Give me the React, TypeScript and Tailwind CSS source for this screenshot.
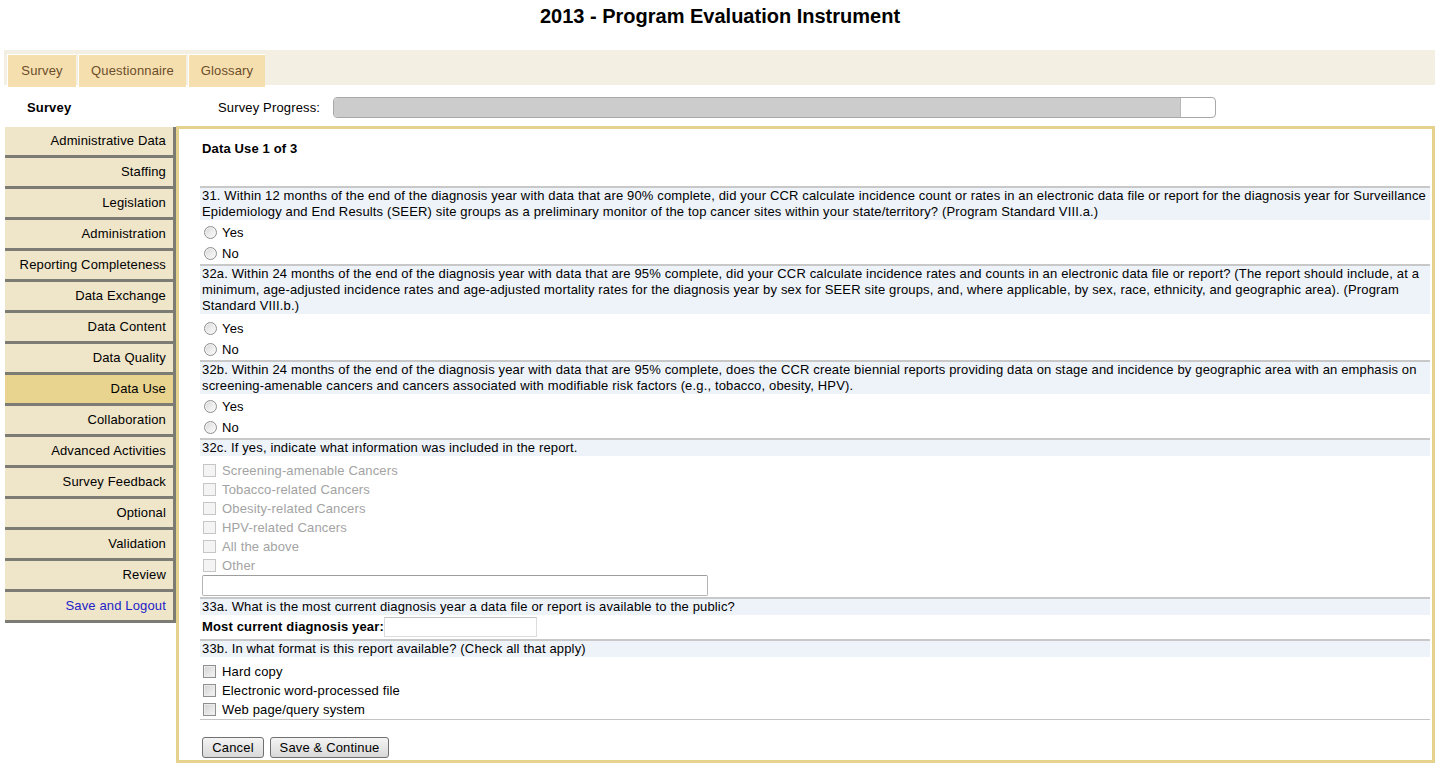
import React from 'react';

const navItems = [
    'Administrative Data',
    'Staffing',
    'Legislation',
    'Administration',
    'Reporting Completeness',
    'Data Exchange',
    'Data Content',
    'Data Quality',
    'Data Use',
    'Collaboration',
    'Advanced Activities',
    'Survey Feedback',
    'Optional',
    'Validation',
    'Review',
];

function Radio({ label }: { label: string }) {
    return (
        <div className="flex h-[21px] items-center pl-[4px]">
            <span className="h-[13px] w-[13px] rounded-full border border-[#8e8f8f] bg-gradient-to-br from-[#d4d4d4] via-[#ececec] to-[#fafafa] shadow-[inset_0_0_0_1px_#f4f4f4]" />
            <span className="ml-[5px]">{label}</span>
        </div>
    );
}

function Check({ label, disabled = false }: { label: string; disabled?: boolean }) {
    return (
        <div className="flex h-[19px] items-center pl-[3px]">
            <span
                className={
                    disabled
                        ? 'h-[13px] w-[13px] border border-[#c6c6c6] bg-[#f4f4f4]'
                        : 'h-[13px] w-[13px] border border-[#8f8f8f] bg-gradient-to-br from-[#d2d2d2] to-[#f6f6f6] shadow-[inset_0_0_0_1px_#ececec]'
                }
            />
            <span className={disabled ? 'ml-[6px] text-[#a3a3a3]' : 'ml-[6px]'}>{label}</span>
        </div>
    );
}

function Question({ children }: { children: React.ReactNode }) {
    return (
        <div className="border-t-2 border-[#c8c8c8] bg-[#eef3fa] pl-[2px] pr-[4px] leading-[16px]">
            {children}
        </div>
    );
}

function Button({ children, w }: { children: React.ReactNode; w: string }) {
    return (
        <button
            className={`${w} h-[21px] rounded-[3px] border border-[#707070] bg-gradient-to-b from-[#f4f4f4] to-[#d9d9d9] text-[13px] leading-[19px] text-black`}
        >
            {children}
        </button>
    );
}

export default function App() {
    return (
        <div className="w-[1449px] h-[774px] overflow-hidden bg-white text-[13px] tracking-[0.15px] text-black [font-family:'Liberation_Sans',Arial,sans-serif]">
            <h1 className="pr-[9px] pt-[4px] text-center text-[20px] font-bold leading-[24px] tracking-normal">
                2013 - Program Evaluation Instrument
            </h1>

            {/* top tabs */}
            <div className="mx-[4px] mt-[22px] flex h-[35px] w-[1431px] gap-[2px] bg-[#f3efe2] pl-[3px] pt-[4px]">
                <div className="flex h-[33px] w-[69px] items-center justify-center border-l border-t border-white bg-[#f6dfae] text-[#6b4d2b]">
                    Survey
                </div>
                <div className="flex h-[33px] w-[108px] items-center justify-center border-l border-t border-white bg-[#f6dfae] text-[#6b4d2b]">
                    Questionnaire
                </div>
                <div className="flex h-[33px] w-[77px] items-center justify-center border-l border-t border-white bg-[#f6dfae] text-[#6b4d2b]">
                    Glossary
                </div>
            </div>

            {/* progress row */}
            <div className="flex h-[41px] items-center pt-[4px]">
                <div className="w-[175px] pl-[27px] font-bold">Survey</div>
                <div className="ml-[43px] w-[115px] whitespace-nowrap">Survey Progress:</div>
                <div className="h-[21px] w-[883px] overflow-hidden rounded-[4px] border border-[#a8a8a8] bg-white">
                    <div className="h-full w-[847px] border-r border-[#b8b8b8] bg-[#cccccc]" />
                </div>
            </div>

            <div className="flex">
                {/* sidebar */}
                <div className="w-[176px] pl-[5px] pt-[1px]">
                    {navItems.map((item) => (
                        <div
                            key={item}
                            className={`flex h-[31px] items-center justify-end border-b-[3px] border-r-[3px] border-[#7c7b74] pr-[7px] ${
                                item === 'Data Use' ? 'bg-[#e8d48f]' : 'bg-[#efe5c9]'
                            }`}
                        >
                            {item}
                        </div>
                    ))}
                    <div className="flex h-[31px] items-center justify-end border-b-[3px] border-r-[3px] border-[#7c7b74] bg-[#efe5c9] pr-[7px] text-[#2323c8]">
                        Save and Logout
                    </div>
                </div>

                {/* content panel */}
                <div className="h-[637px] w-[1259px] border-[3px] border-[#e5d28c] pl-[21px] pr-[2px]">
                    <div className="pl-[2px] pt-[12px] font-bold leading-[16px]">Data Use 1 of 3</div>
                    <div className="h-[29px]" />

                    <Question>
                        31. Within 12 months of the end of the diagnosis year with data that are 90% complete, did your CCR calculate incidence count or rates in an electronic data file or report for the diagnosis year for Surveillance Epidemiology and End Results (SEER) site groups as a preliminary monitor of the top cancer sites within your state/territory? (Program Standard VIII.a.)
                    </Question>
                    <div className="pt-[2px]">
                        <Radio label="Yes" />
                        <Radio label="No" />
                    </div>

                    <Question>
                        32a. Within 24 months of the end of the diagnosis year with data that are 95% complete, did your CCR calculate incidence rates and counts in an electronic data file or report? (The report should include, at a minimum, age-adjusted incidence rates and age-adjusted mortality rates for the diagnosis year by sex for SEER site groups, and, where applicable, by sex, race, ethnicity, and geographic area). (Program Standard VIII.b.)
                    </Question>
                    <div className="pt-[4px]">
                        <Radio label="Yes" />
                        <Radio label="No" />
                    </div>

                    <Question>
                        32b. Within 24 months of the end of the diagnosis year with data that are 95% complete, does the CCR create biennial reports providing data on stage and incidence by geographic area with an emphasis on screening-amenable cancers and cancers associated with modifiable risk factors (e.g., tobacco, obesity, HPV).
                    </Question>
                    <div className="pt-[2px]">
                        <Radio label="Yes" />
                        <Radio label="No" />
                    </div>

                    <Question>32c. If yes, indicate what information was included in the report.</Question>
                    <div className="pt-[5px]">
                        <Check disabled label="Screening-amenable Cancers" />
                        <Check disabled label="Tobacco-related Cancers" />
                        <Check disabled label="Obesity-related Cancers" />
                        <Check disabled label="HPV-related Cancers" />
                        <Check disabled label="All the above" />
                        <Check disabled label="Other" />
                    </div>
                    <div className="mb-[1px] ml-[2px] h-[21px] w-[506px] rounded-[2px] border border-[#b5b5b5] border-t-[#9d9d9d] bg-white" />

                    <Question>33a. What is the most current diagnosis year a data file or report is available to the public?</Question>
                    <div className="flex h-[24px] items-center pl-[2px]">
                        <span className="font-bold">Most current diagnosis year:</span>
                        <span className="h-[20px] w-[153px] border border-[#dcdcdc] border-t-[#c4c4c4] bg-white" />
                    </div>

                    <Question>33b. In what format is this report available? (Check all that apply)</Question>
                    <div className="border-b border-[#c4c4c4] pt-[5px]">
                        <Check label="Hard copy" />
                        <Check label="Electronic word-processed file" />
                        <Check label="Web page/query system" />
                    </div>

                    <div className="flex gap-[6px] pl-[2px] pt-[17px]">
                        <Button w="w-[62px]">Cancel</Button>
                        <Button w="w-[119px]">Save &amp; Continue</Button>
                    </div>
                </div>
            </div>
        </div>
    );
}
